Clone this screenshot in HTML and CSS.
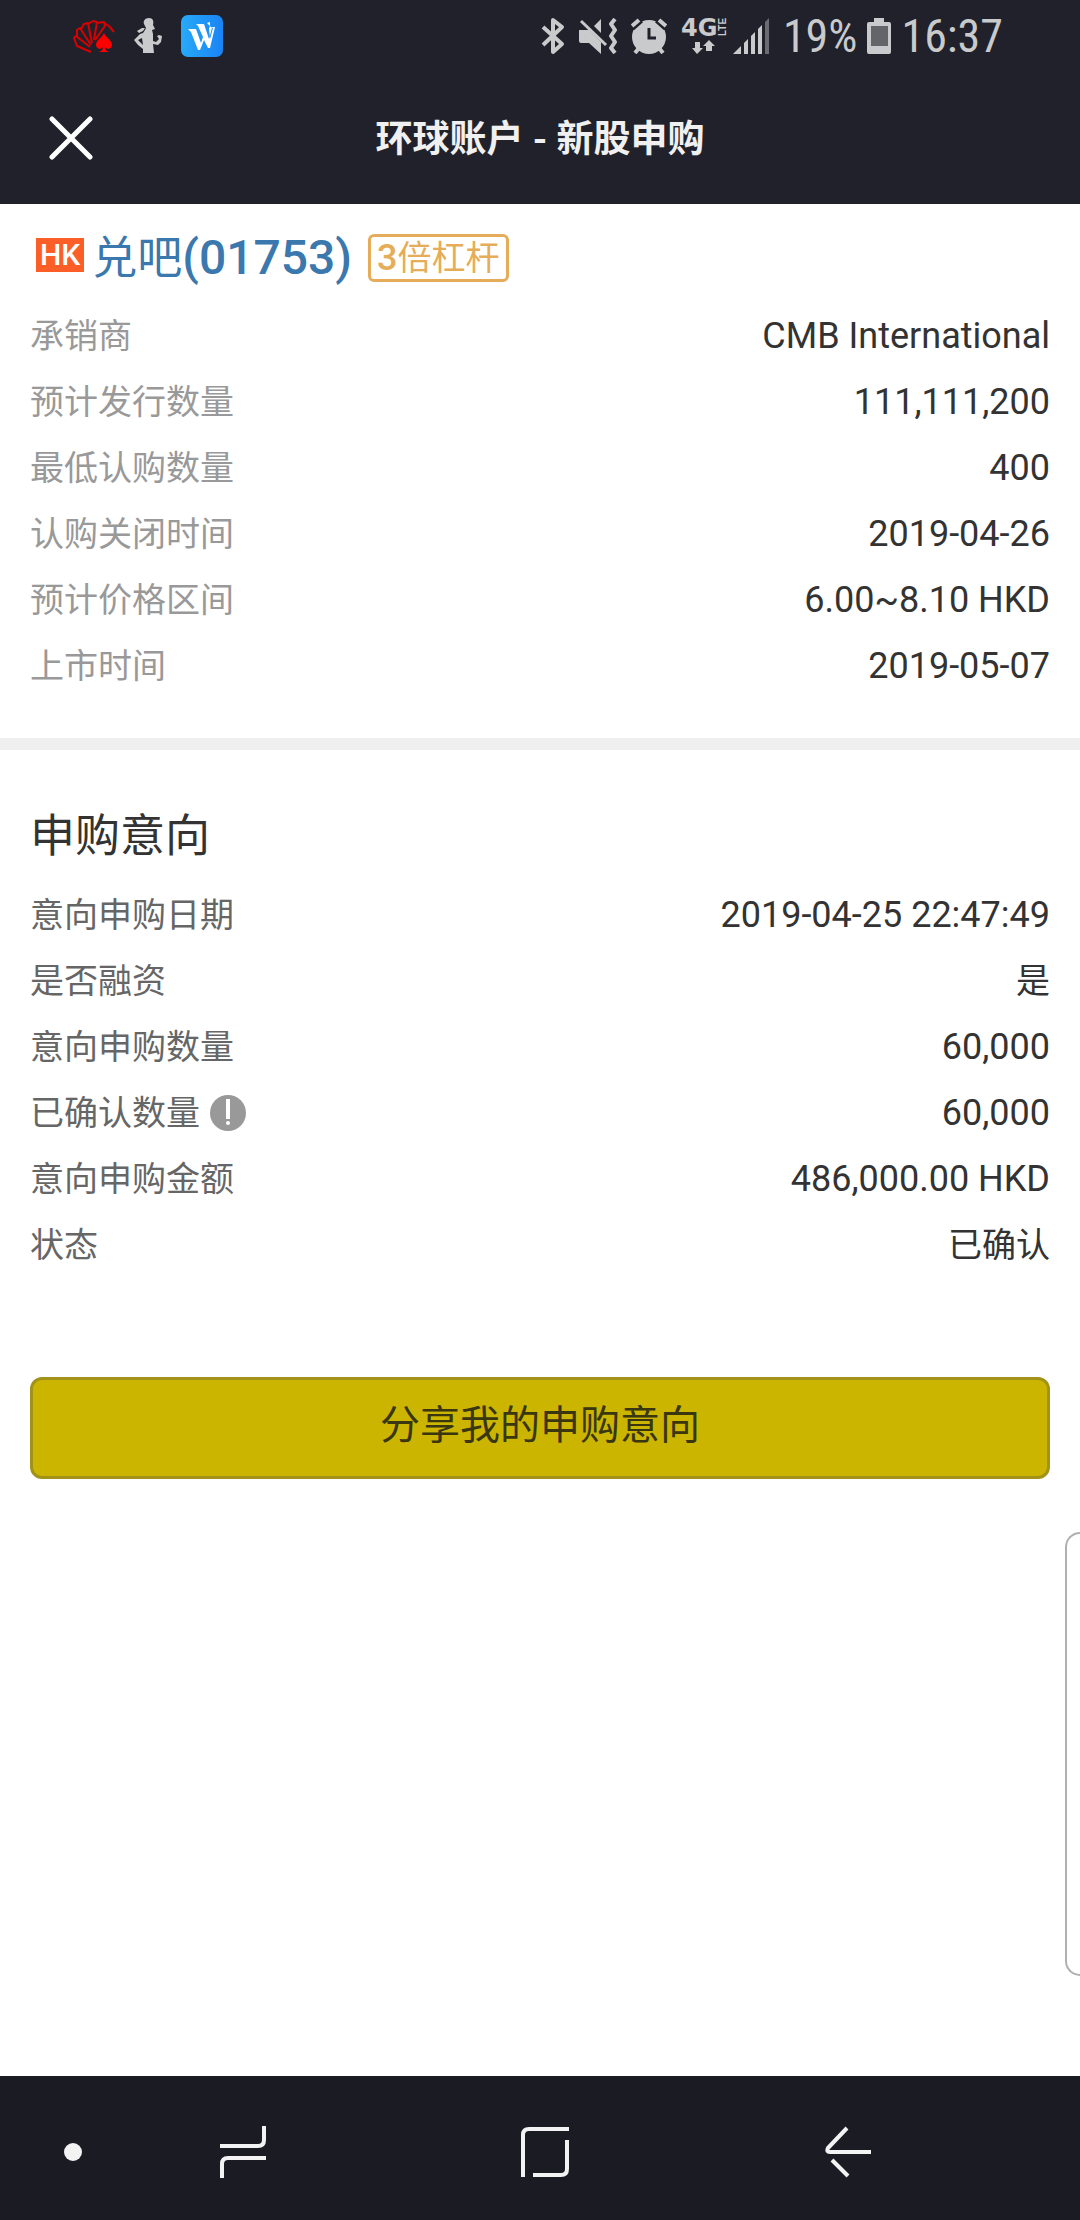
FILE: index.html
```html
<!DOCTYPE html>
<html lang="zh-CN">
<head>
<meta charset="utf-8">
<meta name="viewport" content="width=device-width, initial-scale=1">
<title>环球账户 - 新股申购</title>
<link rel="stylesheet" href="styles.css">
</head>
<body>
<div class="status-bar">
  <div class="status-group status-apps">
    <svg class="app-cards" width="42" height="36" viewBox="0 0 42 36" aria-hidden="true">
      <g fill="none" stroke="#d90000" stroke-width="2" stroke-linejoin="round">
        <path d="M18 34 L4 28 L1 20 L3 18 L17 29"/>
        <path d="M4 19 L4 12 L7 10 L18 27"/>
        <path d="M8 11 L11 6 L15 5 L19 25"/>
        <path d="M15 6 L20 3 L24 4 L21 22"/>
        <path d="M24 5 L31 4 L32 8 L22 22"/>
        <path d="M31 5 L36 8 L41 14"/>
      </g>
      <path fill="#ff0000" d="M31 15 C33 20 39 22 39 27 C39 31 34 32 32 29 C32 32 34 33 36 34 H26 C28 33 30 32 30 29 C28 32 23 31 23 27 C23 22 29 20 31 15Z"/>
    </svg>
    <svg class="app-person" width="28" height="36" viewBox="0 0 28 36" aria-hidden="true">
      <path fill="#c9cacc" fill-rule="evenodd" d="M15 0 C19 0 20 3 19 7 L21 11 L18 12 L19 16 L19 23 L22 24 L25 21 L23 18 L25 17 L28 18 L27 24 L24 27 L19 26 L20 35 H9 V31 L4 27 L0 22 L6 16 L9 15 L11 12 L12 10 L10 6 C9 3 11 0 15 0Z M8 20 L4 22 L9 27Z"/>
      <path fill="#c9cacc" d="M3 13 L8 10 L11 10 L9 13 L5 15Z"/>
    </svg>
    <svg class="app-w" width="42" height="42" viewBox="0 0 42 42" aria-hidden="true">
      <defs><linearGradient id="wbg" x1="0" y1="0" x2="1" y2="0"><stop offset="0" stop-color="#27aaf8"/><stop offset="1" stop-color="#1a83f5"/></linearGradient></defs>
      <rect width="42" height="42" rx="7" fill="url(#wbg)"/>
      <path fill="#fff" d="M7 14 H15 L20 28 L22 22 L17 11 L15 9 H23 L28 24 L31 13 L26 8 L29 7 V11 L28 14 L29 24 L32 13 L30 12 H34 L29 33 H27 L23 25 L19 35 H17 L10 17Z"/>
    </svg>
  </div>
  <div class="status-group status-system">
    <svg class="ic-bt" width="24" height="38" viewBox="0 0 24 38" aria-hidden="true">
      <path fill="none" stroke="#c9cacc" stroke-width="4" stroke-linejoin="round" d="M2 10 L21 27 L12 35 V3 L21 10 L2 28"/>
    </svg>
    <svg class="ic-mute" width="38" height="36" viewBox="0 0 38 36" aria-hidden="true">
      <path fill="#c9cacc" d="M0 12 H10 L22 24 V36 L10 25 H2 Q0 25 0 23Z M15 8 L22 1 V15Z"/>
      <path fill="none" stroke="#c9cacc" stroke-width="3" d="M2 3 L27 27"/>
      <path fill="none" stroke="#c9cacc" stroke-width="4" stroke-linejoin="round" d="M36 1 L32 6 L36 12 L32 18 L36 24 L32 30 L36 35"/>
    </svg>
    <svg class="ic-alarm" width="36" height="36" viewBox="0 0 36 36" aria-hidden="true">
      <circle cx="18" cy="19" r="17" fill="#c9cacc"/>
      <path stroke="#21212b" stroke-width="9" d="M0 9 L9 1 M36 9 L27 1"/>
      <path stroke="#c9cacc" stroke-width="4" d="M1 8 L8 2 M35 8 L28 2 M8 30 L4 35 M28 30 L32 35"/>
      <path fill="none" stroke="#21212b" stroke-width="3" d="M18 10 V20 H25"/>
    </svg>
    <svg class="ic-4g" width="46" height="36" viewBox="0 0 46 36">
      <text class="net-type" x="0" y="18">4G</text>
      <text class="net-mode" x="-18" y="45" transform="rotate(-90)">LTE</text>
      <path fill="#c9cacc" d="M14 24 H19 V30 H22 L16 36 L11 30 H14Z M25 33 V28 H22 L28 22 L34 28 H31 V33Z"/>
    </svg>
    <svg class="ic-signal" width="36" height="36" viewBox="0 0 36 36" aria-hidden="true">
      <path fill="#c9cacc" d="M0 36 L8 28 V36Z M11 25 L15 21 V36 H11Z M18 18 L22 14 V36 H18Z M25 11 L29 7 V36 H25Z"/>
      <path fill="#6b6b72" d="M32 4 L36 0 V36 H32Z"/>
    </svg>
    <div class="status-group status-readout">
      <span class="battery-level">19%</span>
      <svg class="ic-battery" width="24" height="36" viewBox="0 0 24 36" aria-hidden="true">
        <path fill="#c9cacc" d="M7 0 H17 V4 H22 Q24 4 24 6 V34 Q24 36 22 36 H2 Q0 36 0 34 V6 Q0 4 2 4 H7Z"/>
        <rect x="4" y="8" width="17" height="20" fill="#64656b"/>
      </svg>
      <span class="clock">16:37</span>
    </div>
  </div>
</div>

<header class="app-header">
  <button class="close" type="button" aria-label="关闭">
    <svg width="44" height="44" viewBox="0 0 44 44" aria-hidden="true"><path fill="none" stroke="#fff" stroke-width="5" stroke-linecap="round" d="M3 3 L41 41 M41 3 L3 41"/></svg>
  </button>
  <h1 class="page-title">环球账户 - 新股申购</h1>
</header>

<main class="content">
  <section class="stock">
    <div class="stock-head">
      <span class="market">HK</span>
      <h2 class="stock-name"><a href="#stock">兑吧<span class="stock-code">(01753)</span></a></h2>
      <span class="leverage"><span class="leverage-number">3</span>倍杠杆</span>
    </div>
    <dl class="rows rows-muted">
      <div class="row"><dt>承销商</dt><dd>CMB International</dd></div>
      <div class="row"><dt>预计发行数量</dt><dd>111,111,200</dd></div>
      <div class="row"><dt>最低认购数量</dt><dd>400</dd></div>
      <div class="row"><dt>认购关闭时间</dt><dd>2019-04-26</dd></div>
      <div class="row"><dt>预计价格区间</dt><dd>6.00~8.10 HKD</dd></div>
      <div class="row"><dt>上市时间</dt><dd>2019-05-07</dd></div>
    </dl>
  </section>

  <section class="intent">
    <h2 class="section-title">申购意向</h2>
    <dl class="rows">
      <div class="row"><dt>意向申购日期</dt><dd>2019-04-25 22:47:49</dd></div>
      <div class="row"><dt>是否融资</dt><dd class="han">是</dd></div>
      <div class="row"><dt>意向申购数量</dt><dd>60,000</dd></div>
      <div class="row">
        <dt>已确认数量<button class="hint" type="button" aria-label="说明"><svg width="36" height="36" viewBox="0 0 36 36" aria-hidden="true"><circle cx="18" cy="18" r="18" fill="#999"/><path fill="#fff" d="M16 4 H20 V24 H16Z"/><circle cx="18" cy="28" r="2" fill="#fff"/></svg></button></dt>
        <dd>60,000</dd>
      </div>
      <div class="row"><dt>意向申购金额</dt><dd>486,000.00 HKD</dd></div>
      <div class="row"><dt>状态</dt><dd class="han">已确认</dd></div>
    </dl>
    <button class="share" type="button">分享我的申购意向</button>
  </section>
  <div class="edge-panel"></div>
</main>

<nav class="nav-bar">
  <button type="button" aria-label="隐藏导航栏"><svg width="18" height="18" viewBox="0 0 18 18"><circle cx="9" cy="9" r="9" fill="#f3f3f3"/></svg></button>
  <button type="button" aria-label="最近使用"><svg width="46" height="54" viewBox="0 0 46 54"><path fill="none" stroke="#f3f3f3" stroke-width="4" d="M44 1 V15 Q44 21 38 21 H0 M2 53 V39 Q2 33 8 33 H46"/></svg></button>
  <button type="button" aria-label="主页"><svg width="48" height="50" viewBox="0 0 48 50"><path fill="none" stroke="#f3f3f3" stroke-width="4" d="M2 50 V8 Q2 2 8 2 H48 M46 13 V42 Q46 48 40 48 H12"/></svg></button>
  <button type="button" aria-label="返回"><svg width="46" height="52" viewBox="0 0 46 52"><path fill="none" stroke="#f3f3f3" stroke-width="4" stroke-linejoin="round" d="M22 2 L3 22 Q1 26 5 26 H46 M7 34 L23 50"/></svg></button>
</nav>
</body>
</html>
```
FILE: styles.css
```css
* {
  box-sizing: border-box;
}

body {
  margin: 0;
  min-height: 100vh;
  display: flex;
  flex-direction: column;
  background: #fff;
  color: #333;
  font-family: Roboto, "Noto Sans CJK SC", sans-serif;
  font-size: 34px;
}

button {
  padding: 0;
  border: 0;
  background: none;
  color: inherit;
  font: inherit;
}

svg {
  display: block;
  flex: none;
}

h1,
h2,
dl,
dd {
  margin: 0;
}

.status-bar {
  display: flex;
  justify-content: space-between;
  align-items: center;
  height: 72px;
  padding: 0 77px 0 73px;
  background: #21212b;
  color: #c9cacc;
}

.status-group {
  display: flex;
  align-items: center;
}

.status-apps {
  gap: 19px;
}

.status-system {
  gap: 14px;
  font-family: "Roboto Condensed", "Liberation Sans Narrow", Roboto, sans-serif;
  font-size: 46px;
  line-height: 74px;
}

.status-readout {
  gap: 10px;
}

.ic-4g {
  overflow: visible;
  fill: #c9cacc;
}

.net-type {
  font: 700 24px "DejaVu Sans", sans-serif;
}

.net-mode {
  font: 700 10px "Liberation Sans", sans-serif;
}

.ic-signal {
  margin-left: -8px;
}

.app-header {
  display: grid;
  grid-template-columns: 120px 1fr 120px;
  align-items: center;
  height: 132px;
  background: #21212b;
  color: #f0f0f0;
}

.close {
  display: flex;
  justify-self: start;
  margin-left: 49px;
}

.page-title {
  padding-top: 4px;
  font-size: 37px;
  font-weight: 700;
  line-height: 60px;
  text-align: center;
}

.content {
  position: relative;
  flex: 1;
}

.stock {
  padding: 24px 30px 39px;
  border-bottom: 12px solid #efefef;
}

.stock-head {
  display: flex;
  align-items: center;
  height: 60px;
  margin-bottom: 15px;
  padding-left: 6px;
}

.market {
  margin-bottom: 6px;
  padding: 0 4px;
  background: #fc5e28;
  color: #fff;
  font-size: 30px;
  font-weight: 500;
  line-height: 34px;
}

.stock-name {
  margin: 0 16px 0 8px;
  font-size: 45px;
  font-weight: 400;
  line-height: 60px;
}

.stock-name a {
  color: #3a78ad;
  text-decoration: none;
}

.stock-code {
  font-size: 48px;
  font-weight: 500;
}

.leverage {
  padding: 0 6px;
  border: 3px solid #e5ad59;
  border-radius: 6px;
  color: #e5ad59;
  font-size: 34px;
  line-height: 42px;
}

.leverage-number {
  font-size: 36px;
  font-weight: 500;
}

.row {
  display: flex;
  justify-content: space-between;
  align-items: baseline;
  line-height: 66px;
}

.row dt {
  display: flex;
  align-items: center;
  height: 66px;
  color: #666;
}

.rows-muted dt {
  color: #999;
}

.row dd {
  font-size: 36px;
}

.row .han {
  font-size: 34px;
}

.hint {
  margin-left: 10px;
}

.intent {
  padding: 54px 30px 80px;
}

.section-title {
  margin-bottom: 12px;
  font-size: 45px;
  font-weight: 400;
  line-height: 66px;
}

.share {
  display: block;
  width: 100%;
  margin-top: 99px;
  padding: 16px 0 20px;
  border: 3px solid #a3921a;
  border-radius: 12px;
  background: #ccb500;
  color: #393610;
  font-size: 40px;
  line-height: 60px;
}

.edge-panel {
  position: absolute;
  right: 0;
  bottom: 100px;
  width: 15px;
  height: 444px;
  border: 2px solid #b0b0b0;
  border-right: 0;
  border-radius: 18px 0 0 18px;
}

.nav-bar {
  display: grid;
  grid-template-columns: 146fr 194fr 410fr 196fr 134fr;
  height: 144px;
  padding-top: 8px;
  background: #1b1b23;
}

.nav-bar button {
  display: flex;
  align-items: center;
  justify-content: center;
}
```
